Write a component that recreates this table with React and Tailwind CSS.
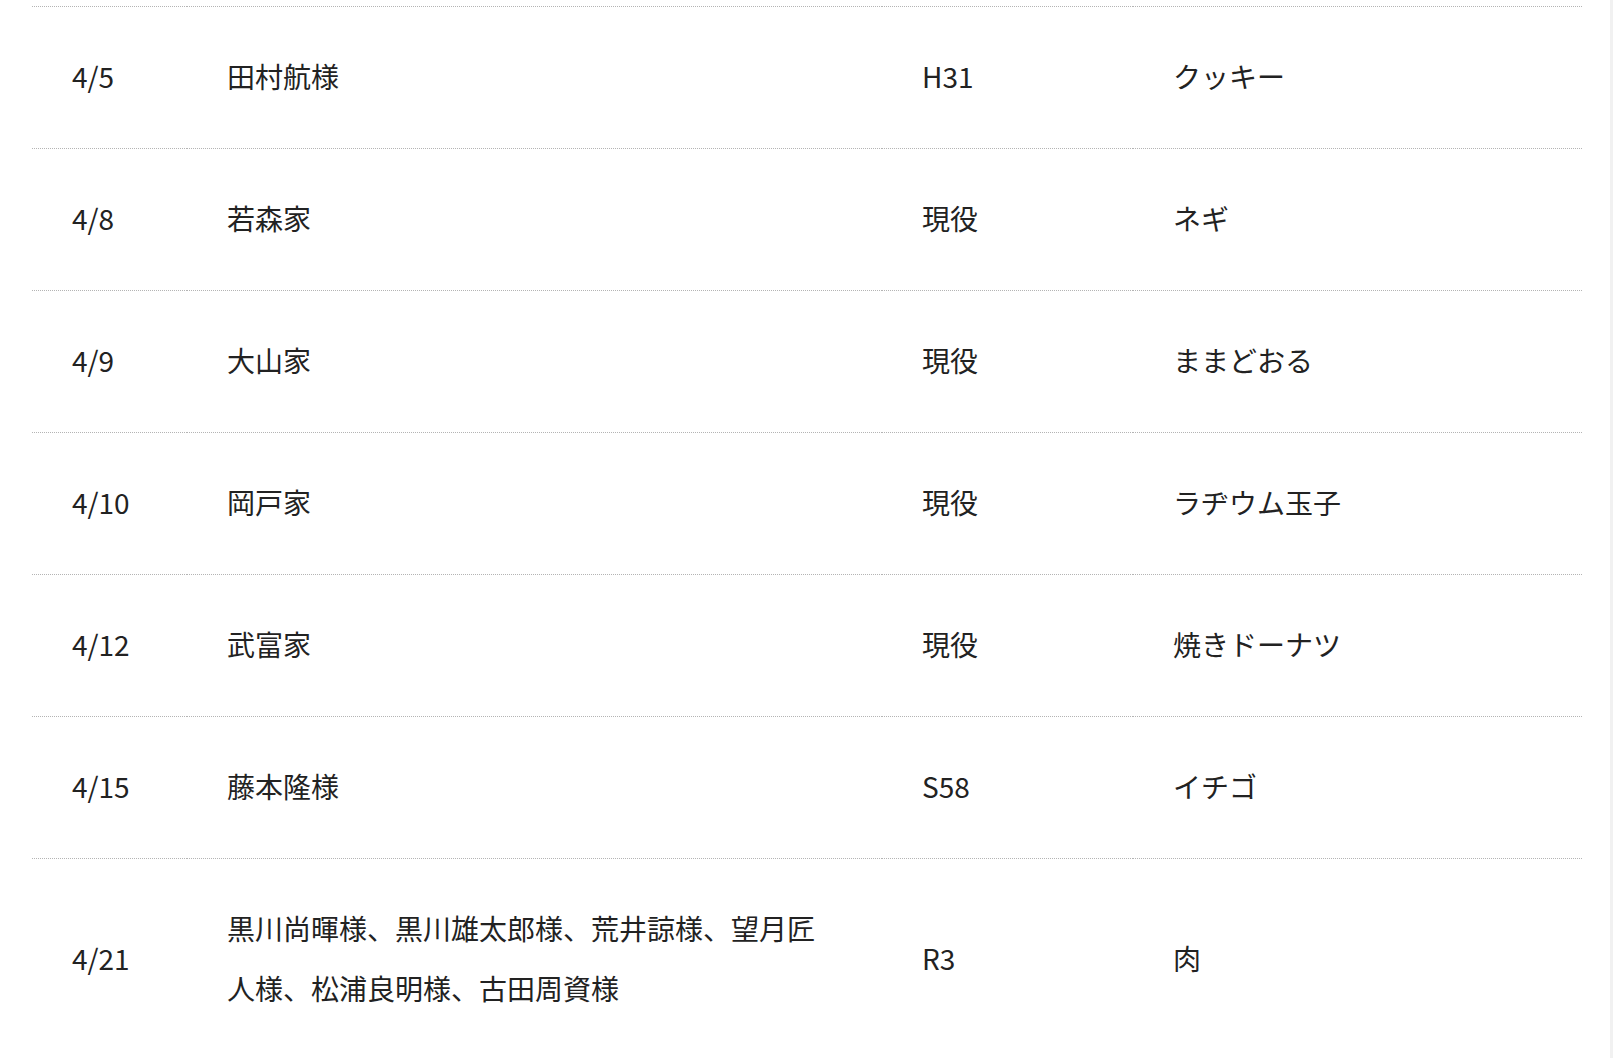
const rows = [
  { date: "4/5", name: "田村航様", year: "H31", gift: "クッキー" },
  { date: "4/8", name: "若森家", year: "現役", gift: "ネギ" },
  { date: "4/9", name: "大山家", year: "現役", gift: "ままどおる" },
  { date: "4/10", name: "岡戸家", year: "現役", gift: "ラヂウム玉子" },
  { date: "4/12", name: "武富家", year: "現役", gift: "焼きドーナツ" },
  { date: "4/15", name: "藤本隆様", year: "S58", gift: "イチゴ" },
  {
    date: "4/21",
    name: "黒川尚暉様、黒川雄太郎様、荒井諒様、望月匠人様、松浦良明様、古田周資様",
    year: "R3",
    gift: "肉",
  },
];

const line = "border-b border-dotted border-[#b4b4b4]";
const cell = `flex items-center px-[40px] pt-[39px] pb-[42px] ${line}`;

const App = () => {
  return (
    <div
      className="flex h-[1058px] overflow-hidden bg-white text-[#222] text-[28px] leading-[60px]"
      style={{ fontFamily: '"Noto Sans CJK JP", "Noto Sans", sans-serif' }}>
      <div className="flex-1 pl-[32px]">
        <div className="w-[1550px]">
          {/* tail of the row above, cut off by the scroll */}
          <div className="flex h-[7px]">
            <div className={`w-[155px] ${line}`} />
            <div className={`w-[695px] ${line}`} />
            <div className={`w-[251px] ${line}`} />
            <div className={`w-[449px] ${line}`} />
          </div>

          {rows.map((row) => (
            <div key={row.date} className="flex">
              <div className={`w-[155px] ${cell}`}>{row.date}</div>
              <div className={`w-[695px] ${cell}`}>
                <span className="block">{row.name}</span>
              </div>
              <div className={`w-[251px] ${cell}`}>{row.year}</div>
              <div className={`w-[449px] ${cell}`}>{row.gift}</div>
            </div>
          ))}
        </div>
      </div>
      <div className="w-[3px] bg-[#f1f1f1]" />
    </div>
  );
};

export default App;
